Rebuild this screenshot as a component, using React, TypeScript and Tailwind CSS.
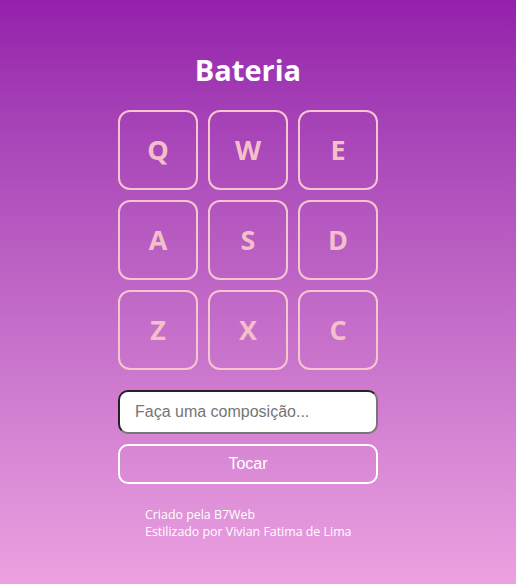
import React from "react";

export default function App() {
  const keys = ["Q", "W", "E", "A", "S", "D", "Z", "X", "C"];
  return (
    <div className="min-h-[584px] w-full bg-gradient-to-b from-[#9420ab] to-[#eca1e0] flex justify-center pr-[20px] font-['Open_Sans',sans-serif]">
      <div className="w-[260px] flex flex-col">
        <h1 className="mt-[51px] text-center text-[29px] leading-[38px] font-bold text-white">
          Bateria
        </h1>
        <div className="mt-[21px] grid grid-cols-3 gap-[10px]">
          {keys.map((k) => (
            <div
              key={k}
              className="h-[80px] rounded-[12px] border-2 border-[#f5c6d0] flex items-center justify-center text-[27px] font-bold text-[#f3c0ca]"
            >
              {k}
            </div>
          ))}
        </div>
        <input
          type="text"
          placeholder="Faça uma composição..."
          className="mt-[20px] h-[44px] w-full rounded-[10px] bg-white px-[15px] text-[16px] font-['Liberation_Sans',Arial,sans-serif] border-2 border-t-[#222] border-l-[#222] border-r-[#767676] border-b-[#767676] placeholder:text-[#757575] outline-none"
        />
        <button className="mt-[10px] h-[40px] w-full rounded-[10px] border-2 border-white text-white text-[16px] font-['Liberation_Sans',Arial,sans-serif]">
          Tocar
        </button>
        <div className="mt-[22px] pl-[27px] text-[12.4px] leading-[17px] text-white">
          <div>Criado pela B7Web</div>
          <div>Estilizado por Vivian Fatima de Lima</div>
        </div>
      </div>
    </div>
  );
}
